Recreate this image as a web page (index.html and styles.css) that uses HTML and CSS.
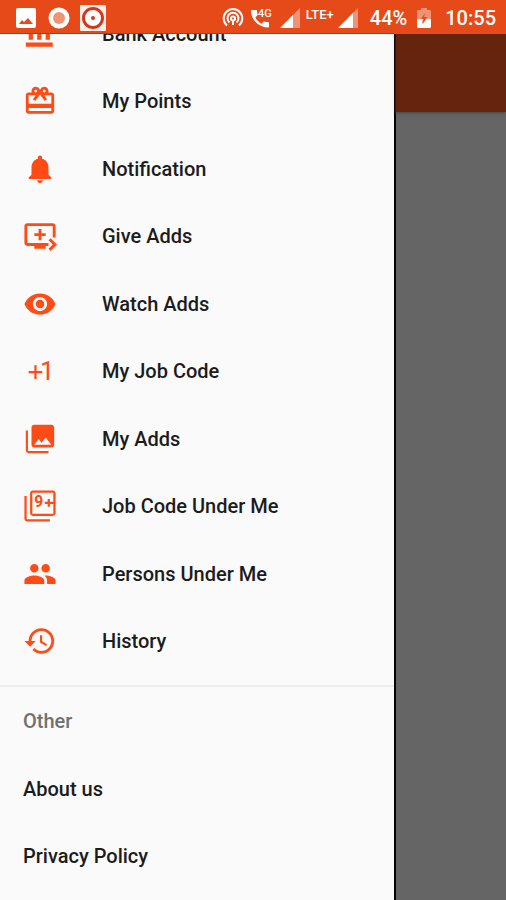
FILE: index.html
```html
<!DOCTYPE html>
<html lang="en">
<head>
<meta charset="utf-8">
<meta name="viewport" content="width=device-width, initial-scale=1">
<title>Menu</title>
<link rel="stylesheet" href="styles.css">
</head>
<body>
<header class="status">
  <div class="status-left">
    <svg class="s-photo" viewBox="0 0 20 20"><rect width="20" height="20" rx="2" fill="#fff"/><path d="M3 16l3-4 2 2 4-4 5 6z" fill="#e64a19"/></svg>
    <svg class="s-dot" viewBox="0 0 22 22"><circle cx="11" cy="11" r="10.500" fill="#fff"/><circle cx="11" cy="11" r="6" fill="#ef9476"/></svg>
    <svg class="s-target" viewBox="0 0 26 26"><rect width="26" height="26" rx="1" fill="#fdeee9"/><circle cx="13" cy="13" r="9.500" fill="#fff" stroke="#d4381c" stroke-width="3"/><circle cx="13" cy="13" r="2" fill="#d4381c"/></svg>
  </div>
  <div class="status-right">
    <svg class="s-hotspot" viewBox="0 0 22 22" fill="none" stroke="#fff" stroke-width="2"><path d="M5 18.500A9.300 9.300 0 1 1 17 18.500M7.500 15.500A5.500 5.500 0 1 1 14.500 15.500"/><circle cx="11" cy="11.500" r="2"/><path d="M11 13v5"/></svg>
    <svg class="s-call" viewBox="0 0 24 22"><path d="M2 3h4c1 0 1 0 1 1 0 1 .3 2.500.6 3.500.1.400 0 .800-.3 1.100L5.400 10.500c1.400 2.800 3.300 4.800 6.100 6.200l2-2c.300-.3.700-.4 1.100-.2 1.100.4 2.200.6 3.400.6.600 0 1 .4 1 1v3.400c0 .6-.4 1-1 1C9 20.500 1 12.500 1 4c0-.6.400-1 1-1z" fill="#fff"/><text x="8" y="10" class="tiny">4G</text></svg>
    <svg class="s-signal" viewBox="0 0 20 20"><path d="M0 20L20 0v20z" fill="#fff" opacity=".4"/><path d="M0 20L13 7v13z" fill="#fff"/></svg>
    <span class="lte">LTE+</span>
    <svg class="s-signal" viewBox="0 0 20 20"><path d="M0 20L20 0v20z" fill="#fff" opacity=".4"/><path d="M0 20L15 5v15z" fill="#fff"/></svg>
    <span class="battery-level">44%</span>
    <svg class="s-battery" viewBox="0 0 14 20"><path d="M4 0h6v2h3l1 1v9H0V3l1-1h3z" fill="#fff" opacity=".4"/><path d="M0 11h4l2 0-1 5 4-5h5v8l-1 1H1l-1-1z" fill="#fff"/><path d="M8 5l-4 6h3l-1 5 4-7H7z" fill="#e64a19"/></svg>
    <time class="clock">10:55</time>
  </div>
</header>
<div class="screen">
  <nav class="drawer" aria-label="Main menu">
    <ul class="menu">
      <li><a href="#bank"><svg class="icon" viewBox="0 0 24 24"><path d="M4 8v8h3V8H4zm6 0v8h3V8h-3zM2 21h19v-3H2v3zM16 8v8h3V8h-3zm-4.500-8L2 5v2h19V5z"/></svg>Bank Account</a></li>
      <li><a href="#points"><svg class="icon" viewBox="0 0 24 24"><path d="M20 6h-2.180c.11-.31.18-.65.18-1 0-1.660-1.340-3-3-3-1.050 0-1.960.54-2.500 1.350l-.5.670-.5-.68C10.960 2.540 10.050 2 9 2 7.340 2 6 3.340 6 5c0 .35.070.69.180 1H4c-1.110 0-1.990.89-1.990 2L2 19c0 1.110.89 2 2 2h16c1.110 0 2-.89 2-2V8c0-1.110-.89-2-2-2zm-5-2c.55 0 1 .45 1 1s-.45 1-1 1-1-.45-1-1 .45-1 1-1zM9 4c.55 0 1 .45 1 1s-.45 1-1 1-1-.45-1-1 .45-1 1-1zm11 15H4v-2h16v2zm0-5H4V8h5.080L7 10.830 8.620 12 11 8.760l1-1.360 1 1.360L15.380 12 17 10.830 14.920 8H20v6z"/></svg>My Points</a></li>
      <li><a href="#notification"><svg class="icon" viewBox="0 0 24 24"><path d="M12 22c1.100 0 2-.9 2-2h-4c0 1.100.89 2 2 2zm6-6v-5c0-3.070-1.640-5.640-4.500-6.320V4c0-.83-.67-1.500-1.500-1.500s-1.500.67-1.500 1.500v.68C7.630 5.360 6 7.920 6 11v5l-2 2v1h16v-1l-2-2z"/></svg>Notification</a></li>
      <li><a href="#give"><svg class="icon" viewBox="0 0 24 24"><path d="M21 3H3c-1.110 0-2 .89-2 2v12c0 1.100.89 2 2 2h5v2h8v-2h2v-2H3V5h18v8h2V5c0-1.110-.89-2-2-2zm-8 7V7h-2v3H8v2h3v3h2v-3h3v-2h-3zm11 8l-4.500 4.500L18 21l3-3-3-3 1.500-1.500L24 18z"/></svg>Give Adds</a></li>
      <li><a href="#watch"><svg class="icon" viewBox="0 0 24 24"><path d="M12 4.500C7 4.500 2.730 7.610 1 12c1.730 4.390 6 7.500 11 7.500s9.270-3.110 11-7.500c-1.730-4.390-6-7.500-11-7.500zM12 17c-2.760 0-5-2.240-5-5s2.240-5 5-5 5 2.240 5 5-2.240 5-5 5zm0-8c-1.660 0-3 1.340-3 3s1.340 3 3 3 3-1.340 3-3-1.340-3-3-3z"/></svg>Watch Adds</a></li>
      <li><a href="#job-code"><svg class="icon plus-one" viewBox="0 0 24 24"><path d="M8 8v4H4v1.600h4v4h1.600v-4h4V12h-4V8z"/><text x="12" y="18">1</text></svg>My Job Code</a></li>
      <li><a href="#my-adds"><svg class="icon" viewBox="0 0 24 24"><path d="M22 16V4c0-1.100-.9-2-2-2H8c-1.100 0-2 .9-2 2v12c0 1.100.9 2 2 2h12c1.100 0 2-.9 2-2zm-11-4l2.030 2.710L16 11l4 5H8l3-4zM2 6v14c0 1.100.9 2 2 2h14v-1.500H3.500V6H2z"/></svg>My Adds</a></li>
      <li><a href="#codes-under-me"><svg class="icon nine-plus" viewBox="0 0 24 24"><path d="M2.600 5H1v16c0 1.100.9 2 2 2h16v-1.600H2.600V5zM21 1H7c-1.100 0-2 .9-2 2v14c0 1.100.9 2 2 2h14c1.100 0 2-.9 2-2V3c0-1.100-.9-2-2-2zm.4 8H19V7h-1.600v2h-2v1.600h2v2H19v-2h2.400v6.800H6.600V2.600h14.800z"/><text x="8" y="13">9</text></svg>Job Code Under Me</a></li>
      <li><a href="#persons"><svg class="icon" viewBox="0 0 24 24"><path d="M16 11c1.660 0 2.990-1.340 2.990-3S17.660 5 16 5c-1.660 0-3 1.340-3 3s1.340 3 3 3zm-8 0c1.660 0 2.990-1.340 2.990-3S9.660 5 8 5C6.340 5 5 6.340 5 8s1.340 3 3 3zm0 2c-2.330 0-7 1.170-7 3.500V19h14v-2.500c0-2.330-4.670-3.500-7-3.500zm8 0c-.29 0-.62.020-.97.050 1.160.84 1.970 1.970 1.970 3.450V19h6v-2.500c0-2.330-4.670-3.500-7-3.500z"/></svg>Persons Under Me</a></li>
      <li><a href="#history"><svg class="icon" viewBox="0 0 24 24"><path d="M13 3c-4.970 0-9 4.030-9 9H1l3.890 3.890.07.14L9 12H6c0-3.870 3.130-7 7-7s7 3.130 7 7-3.130 7-7 7c-1.930 0-3.680-.79-4.940-2.060l-1.420 1.420C8.270 19.990 10.510 21 13 21c4.970 0 9-4.030 9-9s-4.030-9-9-9zm-1 5v5l4.280 2.540.72-1.210-3.500-2.080V8H12z"/></svg>History</a></li>
    </ul>
    <section class="other">
      <h2>Other</h2>
      <a href="#about">About us</a>
      <a href="#privacy">Privacy Policy</a>
    </section>
  </nav>
  <main class="page"><div class="toolbar"></div></main>
</div>
</body>
</html>
```
FILE: styles.css
```css
* {
  box-sizing: border-box;
}

body {
  margin: 0;
  font-family: Roboto, "Liberation Sans", sans-serif;
  font-size: 20px;
  font-weight: 500;
  color: #1c1c1c;
  background: #656565;
}

svg {
  display: block;
  flex: none;
}

.status {
  position: fixed;
  inset: 0 0 auto;
  z-index: 2;
  height: 34px;
  padding: 2px 10px 0 16px;
  display: flex;
  align-items: center;
  justify-content: space-between;
  color: #fff;
  background: #e64a19;
}

.status::after {
  content: "";
  position: absolute;
  left: 0;
  right: 112px;
  bottom: 0;
  height: 1px;
  background: #e5200f;
}

.status-left,
.status-right {
  display: flex;
  align-items: center;
}

.status-left {
  gap: 12px;
}

.status-right {
  gap: 6px;
}

.s-photo {
  width: 20px;
  height: 20px;
}

.s-dot {
  width: 22px;
  height: 22px;
}

.s-target {
  width: 26px;
  height: 26px;
  margin-left: -2px;
}

.s-hotspot {
  width: 22px;
  height: 22px;
}

.s-call {
  width: 24px;
  height: 22px;
}

.s-signal {
  width: 20px;
  height: 20px;
}

.s-battery {
  width: 14px;
  height: 20px;
  margin: 0 8px 0 4px;
}

.tiny {
  font-size: 11px;
  fill: #fff;
}

.lte {
  margin-right: -2px;
  font-size: 13px;
  line-height: 13px;
  padding-bottom: 8px;
}

.battery-level {
  margin-left: 6px;
}

.battery-level,
.clock {
  font-size: 20px;
  line-height: 24px;
}

.screen {
  display: flex;
  min-height: 100vh;
}

.drawer {
  flex: 1;
  background: #fafafa;
  border-right: 2px solid #050505;
}

.page {
  width: 110px;
  padding-top: 34px;
  background: #656565;
}

.toolbar {
  height: 78px;
  background: #66240f;
  box-shadow: 0 1px 3px #444;
}

.menu {
  margin: 0;
  padding: 0 0 10px;
  list-style: none;
}

.menu a,
.other a,
.other h2 {
  display: flex;
  align-items: center;
  height: 68px;
  padding-left: 23px;
  color: inherit;
  text-decoration: none;
}

.menu li:nth-child(odd) a,
.other a:first-of-type {
  height: 67px;
}

.icon {
  width: 34px;
  height: 34px;
  margin-right: 45px;
  fill: #ff4b16;
}

.plus-one text {
  font-size: 18px;
  font-weight: 400;
}

.nine-plus text {
  font-size: 11px;
  font-weight: 700;
}

.other {
  border-top: 2px solid #ececec;
}

.other h2 {
  margin: 0;
  font-size: 20px;
  font-weight: 500;
  color: #717171;
}
```
